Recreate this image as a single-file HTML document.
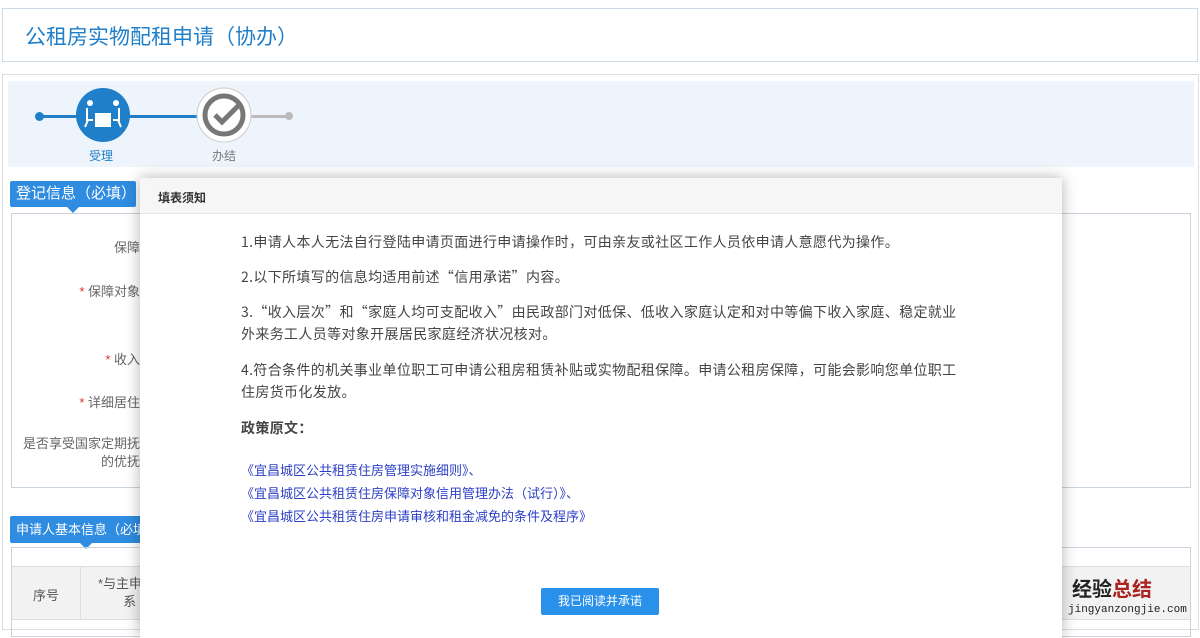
<!DOCTYPE html>
<html><head><meta charset="utf-8"><style>
*{margin:0;padding:0;box-sizing:border-box}
body{width:1200px;height:630px;overflow:hidden;background:#fff;font-family:"Liberation Sans","Noto Sans CJK SC",sans-serif;position:relative;color:#333}
.abs{position:absolute}
.title{left:2px;top:8px;width:1196px;height:54px;border:1px solid #cfdbe6;background:#fff}
.title span{position:absolute;left:22px;top:12px;font-size:21px;color:#1f7fc9;font-family:"Noto Sans CJK SC",sans-serif}
.main{left:2px;top:74px;width:1197px;height:556px;border:1px solid #ddd;background:#fff}
.steps{left:8px;top:81px;width:1186px;height:86px;background:#eef4fb}
.tag{background:#2f8ce0;color:#fff;font-size:15px;border-radius:2px;padding:0 6px;white-space:nowrap;overflow:hidden}
.lbl{font-size:13px;color:#666;text-align:right}
.modal{left:140px;top:178px;width:922px;height:460px;background:#fff;box-shadow:0 0 14px rgba(0,0,0,.3)}
.mh{height:36px;background:#f6f6f6;border-bottom:1px solid #e6e6e6;font-size:12px;font-weight:bold;padding:11px 0 0 18px;color:#333}
.p{position:absolute;left:101px;font-size:14px;color:#444;line-height:22px;width:800px;font-family:"Noto Sans CJK SC",sans-serif;white-space:nowrap;letter-spacing:0.35px}
.lk{position:absolute;left:101px;font-size:13px;color:#2b3fc4;line-height:23px;font-family:"Noto Sans CJK SC",sans-serif}
.btn{position:absolute;left:401px;top:410px;width:118px;height:27px;background:#2a91ea;color:#fff;font-size:12px;text-align:center;line-height:27px;border-radius:2px}
</style></head><body>
<div class="abs title"><span>公租房实物配租申请（协办）</span></div>
<div class="abs main"></div>
<div class="abs steps"></div>
<div class="abs" style="left:40px;top:115px;width:80px;height:3px;background:#1f7fc9"></div>
<div class="abs" style="left:35px;top:112px;width:9px;height:9px;border-radius:50%;background:#1f7fc9"></div>
<div class="abs" style="left:128px;top:115px;width:70px;height:3px;background:#1f7fc9"></div>
<div class="abs" style="left:250px;top:115px;width:40px;height:3px;background:#bbb"></div>
<div class="abs" style="left:285px;top:112px;width:8px;height:8px;border-radius:50%;background:#bbb"></div>
<svg class="abs" style="left:76px;top:88px" width="54" height="54" viewBox="0 0 54 54"><circle cx="27" cy="27" r="27" fill="#1f7fc9"/><rect x="19" y="25" width="16" height="14" fill="#fff"/><circle cx="14" cy="15" r="3" fill="#fff"/><circle cx="40" cy="15" r="3" fill="#fff"/><path d="M11 20v12h6M43 20v12h-6M12 32l-3 7M42 32l3 7" stroke="#fff" stroke-width="2" fill="none"/></svg>
<svg class="abs" style="left:196px;top:87px" width="56" height="56" viewBox="0 0 56 56"><circle cx="28" cy="28" r="27" fill="#fff" stroke="#ccc"/><circle cx="28" cy="28" r="19" fill="none" stroke="#777" stroke-width="5"/><path d="M19 28l7 7 17-17" stroke="#777" stroke-width="5" fill="none"/></svg>
<div class="abs" style="left:89px;top:147px;font-size:12px;color:#1f7fc9">受理</div>
<div class="abs" style="left:212px;top:147px;font-size:12px;color:#777">办结</div>
<div class="abs tag" style="left:10px;top:181px;height:26px;line-height:26px;width:126px">登记信息（必填）</div>
<div class="abs" style="left:67px;top:207px;border:6px solid transparent;border-top-color:#2f8ce0;border-bottom:0"></div>
<div class="abs" style="left:11px;top:213px;width:1180px;height:275px;border:1px solid #c9d3dd"></div>
<div class="abs lbl" style="left:20px;top:237px;width:120px">保障</div>
<div class="abs lbl" style="left:20px;top:281px;width:120px"><span style="color:#d33">*</span> 保障对象</div>
<div class="abs lbl" style="left:20px;top:349px;width:120px"><span style="color:#d33">*</span> 收入</div>
<div class="abs lbl" style="left:20px;top:392px;width:120px"><span style="color:#d33">*</span> 详细居住</div>
<div class="abs lbl" style="left:20px;top:435px;width:120px;line-height:18px">是否享受国家定期抚<br>的优抚</div>
<div class="abs tag" style="left:10px;top:516px;height:27px;line-height:27px;width:134px;font-size:13px">申请人基本信息（必填</div>
<div class="abs" style="left:80px;top:543px;border:6px solid transparent;border-top-color:#2f8ce0;border-bottom:0"></div>
<div class="abs" style="left:11px;top:547px;width:1180px;height:90px;border:1px solid #c9d3dd"></div>
<div class="abs" style="left:12px;top:566px;width:1178px;height:54px;background:#f2f2f2;border-top:1px solid #ddd;border-bottom:1px solid #ddd"></div>
<div class="abs" style="left:80px;top:566px;width:1px;height:54px;background:#ddd"></div>
<div class="abs" style="left:33px;top:585px;font-size:13px;color:#555">序号</div>
<div class="abs" style="left:98px;top:575px;font-size:13px;color:#555;line-height:18px">*与主申<br>&nbsp;&nbsp;&nbsp;&nbsp;&nbsp;&nbsp;&nbsp;系</div>
<div class="abs" style="left:1072px;top:578px;font-size:20px;font-weight:bold;color:#222;line-height:24px">经验<span style="color:#a22">总结</span></div>
<div class="abs" style="left:1068px;top:604px;font-size:11px;font-family:'Liberation Mono',monospace;color:#222">jingyanzongjie.com</div>
<div class="abs modal">
<div class="mh">填表须知</div>
<div class="p" style="top:53px">1.申请人本人无法自行登陆申请页面进行申请操作时，可由亲友或社区工作人员依申请人意愿代为操作。</div>
<div class="p" style="top:88px">2.以下所填写的信息均适用前述“信用承诺”内容。</div>
<div class="p" style="top:123px">3.“收入层次”和“家庭人均可支配收入”由民政部门对低保、低收入家庭认定和对中等偏下收入家庭、稳定就业<br>外来务工人员等对象开展居民家庭经济状况核对。</div>
<div class="p" style="top:181px">4.符合条件的机关事业单位职工可申请公租房租赁补贴或实物配租保障。申请公租房保障，可能会影响您单位职工<br>住房货币化发放。</div>
<div class="p" style="top:239px;font-weight:bold">政策原文：</div>
<div class="lk" style="top:280px">《宜昌城区公共租赁住房管理实施细则》、</div>
<div class="lk" style="top:303px">《宜昌城区公共租赁住房保障对象信用管理办法（试行）》、</div>
<div class="lk" style="top:326px">《宜昌城区公共租赁住房申请审核和租金减免的条件及程序》</div>
<div class="btn">我已阅读并承诺</div>
</div>
</body></html>
